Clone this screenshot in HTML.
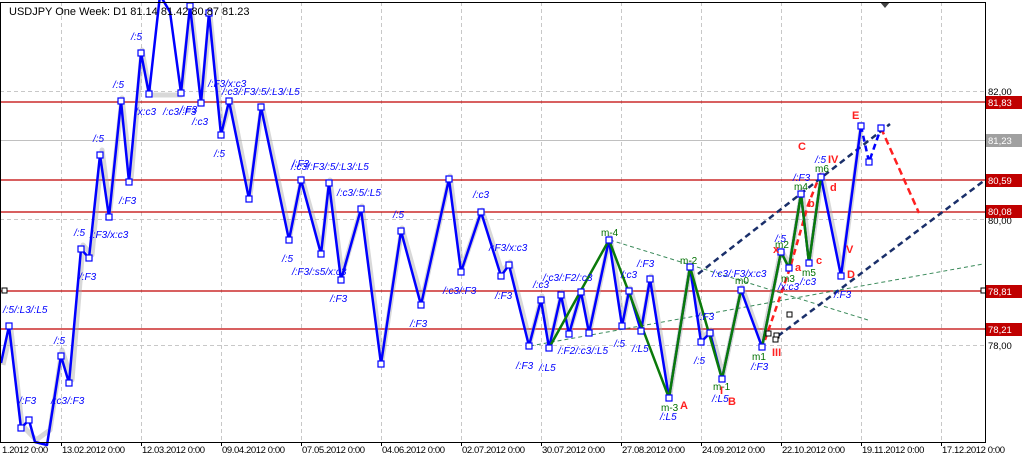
<!DOCTYPE html>
<html><head><meta charset="utf-8"><style>
body{margin:0;background:#fff;width:1022px;height:457px;overflow:hidden}
svg{display:block;font-family:"Liberation Sans",sans-serif}
.b{fill:#0000ff;font-size:10px}
.g{fill:#007000;font-size:10px}
.r{fill:#ff2020;font-size:11px;font-weight:bold}
.ax{fill:#000;font-size:9.5px}
</style></head><body>
<svg width="1022" height="457" viewBox="0 0 1022 457">
<rect x="0" y="0" width="1022" height="457" fill="#fff"/>
<g stroke="#c8c8c8" stroke-dasharray="4,3" stroke-width="1">
<line x1="61.5" y1="2" x2="61.5" y2="442"/><line x1="141.5" y1="2" x2="141.5" y2="442"/><line x1="221.5" y1="2" x2="221.5" y2="442"/><line x1="301.5" y1="2" x2="301.5" y2="442"/><line x1="381.5" y1="2" x2="381.5" y2="442"/><line x1="461.5" y1="2" x2="461.5" y2="442"/><line x1="541.5" y1="2" x2="541.5" y2="442"/><line x1="621.5" y1="2" x2="621.5" y2="442"/><line x1="701.5" y1="2" x2="701.5" y2="442"/><line x1="781.5" y1="2" x2="781.5" y2="442"/><line x1="861.5" y1="2" x2="861.5" y2="442"/><line x1="941.5" y1="2" x2="941.5" y2="442"/>
<line x1="0" y1="91.5" x2="985" y2="91.5"/><line x1="0" y1="219.5" x2="985" y2="219.5"/><line x1="0" y1="345.5" x2="985" y2="345.5"/>
</g>
<line x1="0" y1="140.5" x2="985" y2="140.5" stroke="#c0c0c0"/>
<g stroke="#c00000" stroke-width="1.3">
<line x1="0" y1="102" x2="985" y2="102"/><line x1="0" y1="180" x2="985" y2="180"/><line x1="0" y1="212" x2="985" y2="212"/><line x1="0" y1="291" x2="985" y2="291"/><line x1="0" y1="329" x2="985" y2="329"/>
</g>
<polyline fill="none" stroke="#a8a8a8" stroke-width="5" opacity="0.45" stroke-linejoin="round" points="3,365 11,330 22,425 36,440 50,430 62,350 72,380 83,245 92,255 102,150 110,210 122,98 131,180 142,50 150,95 181,95 191,8 202,100 210,15 222,130 231,100 250,195 262,105 290,235 302,178 322,250 330,180 342,275 362,206 382,360 402,228 422,300 450,176 462,268 482,210 502,272 510,262 530,342 542,296 550,345 562,292 570,330 582,290 590,330 610,237 623,322 630,288 642,328 651,276 670,394 691,263 702,338 711,330 723,375 742,287 762,343 781,250 790,265 802,190 810,260 822,174 842,272 862,122"/>
<g fill="none" stroke="#3a8a5a" stroke-width="1" stroke-dasharray="4,3">
<line x1="530" y1="346" x2="983" y2="264"/><line x1="610" y1="240" x2="868" y2="320"/>
</g>
<g fill="none" stroke="#1a2f6a" stroke-width="2.5" stroke-dasharray="6,4">
<line x1="698" y1="274" x2="890" y2="124"/><line x1="778" y1="336" x2="985" y2="180"/>
</g>
<polyline fill="none" stroke="#ff2020" stroke-width="2.5" stroke-dasharray="7,4" points="881,128 919,213"/>
<polyline fill="none" stroke="#ff2020" stroke-width="2.5" stroke-dasharray="6,4" points="765,340 790,268 808,205 822,170"/>
<polyline fill="none" stroke="#0000ff" stroke-width="2.5" stroke-dasharray="6,4" points="861,126 869,162 881,128"/>
<polyline fill="none" stroke="#0000ff" stroke-width="2.5" stroke-linejoin="round" points="1,363 9,326 21,428 29,420 35,442 47,445 61,356 69,383 81,249 89,258 100,155 109,217 121,101 129,182 141,53 149,94 160,-5 170,12 181,93 190,6 201,103 209,13 221,135 229,101 249,199 261,107 289,240 301,180 321,254 329,183 341,280 361,209 381,364 401,231 421,305 449,179 461,272 481,212 501,276 509,265 529,346 541,300 549,348 561,295 569,334 581,292 589,333 609,240 622,326 629,291 641,331 650,279 669,398 690,267 701,342 710,333 722,379 741,290 762,347 781,252 789,268 801,194 809,263 821,177 841,276 861,126"/>
<polyline fill="none" stroke="#0a7a0a" stroke-width="2.5" stroke-linejoin="round" points="549,348 609,240 669,398 690,267 722,379 741,290"/>
<polyline fill="none" stroke="#0a7a0a" stroke-width="2.5" stroke-linejoin="round" points="762,347 781,252 789,268 801,194 809,263 821,177"/>
<g fill="#fff" stroke="#0000ff" stroke-width="1.2">
<rect x="6" y="323" width="6" height="6"/><rect x="18" y="425" width="6" height="6"/><rect x="26" y="417" width="6" height="6"/><rect x="58" y="353" width="6" height="6"/><rect x="66" y="380" width="6" height="6"/><rect x="78" y="246" width="6" height="6"/><rect x="86" y="255" width="6" height="6"/><rect x="97" y="152" width="6" height="6"/><rect x="106" y="214" width="6" height="6"/><rect x="118" y="98" width="6" height="6"/><rect x="126" y="179" width="6" height="6"/><rect x="138" y="50" width="6" height="6"/><rect x="146" y="91" width="6" height="6"/><rect x="178" y="90" width="6" height="6"/><rect x="187" y="3" width="6" height="6"/><rect x="198" y="100" width="6" height="6"/><rect x="206" y="10" width="6" height="6"/><rect x="218" y="132" width="6" height="6"/><rect x="226" y="98" width="6" height="6"/><rect x="246" y="196" width="6" height="6"/><rect x="258" y="104" width="6" height="6"/><rect x="286" y="237" width="6" height="6"/><rect x="298" y="177" width="6" height="6"/><rect x="318" y="251" width="6" height="6"/><rect x="326" y="180" width="6" height="6"/><rect x="338" y="277" width="6" height="6"/><rect x="358" y="206" width="6" height="6"/><rect x="378" y="361" width="6" height="6"/><rect x="398" y="228" width="6" height="6"/><rect x="418" y="302" width="6" height="6"/><rect x="446" y="176" width="6" height="6"/><rect x="458" y="269" width="6" height="6"/><rect x="478" y="209" width="6" height="6"/><rect x="498" y="273" width="6" height="6"/><rect x="506" y="262" width="6" height="6"/><rect x="526" y="343" width="6" height="6"/><rect x="538" y="297" width="6" height="6"/><rect x="546" y="345" width="6" height="6"/><rect x="558" y="292" width="6" height="6"/><rect x="566" y="331" width="6" height="6"/><rect x="578" y="289" width="6" height="6"/><rect x="586" y="330" width="6" height="6"/><rect x="606" y="237" width="6" height="6"/><rect x="619" y="323" width="6" height="6"/><rect x="626" y="288" width="6" height="6"/><rect x="638" y="328" width="6" height="6"/><rect x="647" y="276" width="6" height="6"/><rect x="666" y="395" width="6" height="6"/><rect x="687" y="264" width="6" height="6"/><rect x="698" y="339" width="6" height="6"/><rect x="707" y="330" width="6" height="6"/><rect x="719" y="376" width="6" height="6"/><rect x="738" y="287" width="6" height="6"/><rect x="759" y="344" width="6" height="6"/><rect x="778" y="249" width="6" height="6"/><rect x="786" y="265" width="6" height="6"/><rect x="798" y="191" width="6" height="6"/><rect x="806" y="260" width="6" height="6"/><rect x="818" y="174" width="6" height="6"/><rect x="838" y="273" width="6" height="6"/><rect x="858" y="123" width="6" height="6"/><rect x="866" y="159" width="6" height="6"/><rect x="878" y="125" width="6" height="6"/>
</g>
<g fill="#fff" stroke="#000" stroke-width="1">
<rect x="766" y="331" width="5" height="5"/><rect x="774" y="333" width="5" height="5"/><rect x="787" y="312" width="5" height="5"/><rect x="773" y="337" width="5" height="5"/><rect x="2" y="288" width="5" height="5"/><rect x="981" y="288" width="5" height="5"/>
</g>
<g class="b" font-style="italic">
<text x="131" y="40">/:5</text><text x="113" y="88">/:5</text><text x="135" y="115">/x:c3</text><text x="163" y="115">/:c3/:F3</text><text x="192" y="125">/:c3</text><text x="93" y="142">/:5</text><text x="208" y="87">/:F3/x:c3</text><text x="222" y="95">/:c3/:F3/:5/:L3/:L5</text><text x="214" y="157">/:5</text><text x="180" y="113">/:F3</text><text x="292" y="167">/:F3</text><text x="291" y="170">/:c3/:F3/:5/:L3/:L5</text><text x="337" y="196">/:c3/:5/:L5</text><text x="393" y="218">/:5</text><text x="282" y="262">/:5</text><text x="292" y="275">/:F3/:s5/x:c3</text><text x="330" y="302">/:F3</text><text x="410" y="327">/:F3</text><text x="443" y="294">/:c3/:F3</text><text x="473" y="198">/:c3</text><text x="489" y="251">/:F3/x:c3</text><text x="495" y="299">/:F3</text><text x="533" y="288">/:c3</text><text x="543" y="281">/:c3/:F2/:c3</text><text x="621" y="278">/:c3</text><text x="637" y="267">/:F3</text><text x="516" y="369">/:F3</text><text x="539" y="371">/:L5</text><text x="558" y="354">/:F2/:c3/:L5</text><text x="614" y="347">/:5</text><text x="632" y="352">/:L5</text><text x="694" y="364">/:5</text><text x="697" y="320">/:F3</text><text x="712" y="277">/:c3/:F3/x:c3</text><text x="660" y="420">/:L5</text><text x="712" y="402">/:L5</text><text x="751" y="370">/:F3</text><text x="775" y="242">/:5</text><text x="778" y="290">/x:c3</text><text x="800" y="285">/:c3</text><text x="793" y="181">/:F3</text><text x="815" y="163">/:5</text><text x="834" y="298">/:F3</text>
<text x="119" y="204">/:F3</text><text x="74" y="236">/:5</text><text x="90" y="238">/:F3/x:c3</text><text x="79" y="280">/:F3</text><text x="3" y="313">/:5/:L3/:L5</text><text x="54" y="344">/:5</text><text x="19" y="404">/:F3</text><text x="51" y="404">/:c3/:F3</text>
</g>
<g class="g">
<text x="601" y="236">m-4</text><text x="680" y="264">m-2</text><text x="735" y="284">m0</text><text x="661" y="411">m-3</text><text x="713" y="390">m-1</text><text x="752" y="360">m1</text><text x="775" y="248">m2</text><text x="781" y="282">m3</text><text x="794" y="190">m4</text><text x="802" y="276">m5</text><text x="815" y="172">m6</text>
</g>
<g class="r">
<text x="680" y="409">A</text><text x="728" y="405">B</text><text x="772" y="356">III</text><text x="798" y="150">C</text><text x="828" y="163">IV</text><text x="852" y="119">E</text><text x="830" y="191">d</text><text x="808" y="207">b</text><text x="773" y="253">x</text><text x="795" y="271">a</text><text x="816" y="264">c</text><text x="846" y="253">V</text><text x="847" y="278">D</text><text x="720" y="394">I</text>
</g>
<text x="9" y="15" font-size="11" fill="#000">USDJPY One Week: D1 81.14 81.42 80.87 81.23</text>
<polygon points="880,2 890,2 885,8" fill="#444"/>
<rect x="0.5" y="2.5" width="985" height="440" fill="none" stroke="#000"/>
<g class="ax"><text x="988" y="95">82,00</text><text x="988" y="224">80,00</text><text x="988" y="349">78,00</text></g>
<g font-size="9.5">
<rect x="986" y="96" width="36" height="13" fill="#c00000"/><text x="988" y="106" fill="#fff">81,83</text>
<rect x="986" y="134" width="36" height="13" fill="#a0a0a0"/><text x="988" y="144" fill="#fff">81,23</text>
<rect x="986" y="174" width="36" height="13" fill="#c00000"/><text x="988" y="184" fill="#fff">80,59</text>
<rect x="986" y="205" width="36" height="13" fill="#c00000"/><text x="988" y="215" fill="#fff">80,08</text>
<rect x="986" y="285" width="36" height="13" fill="#c00000"/><text x="988" y="295" fill="#fff">78,81</text>
<rect x="986" y="323" width="36" height="13" fill="#c00000"/><text x="988" y="333" fill="#fff">78,21</text>
</g>
<g class="ax" font-size="9" letter-spacing="-0.4">
<text x="2" y="453">1.2012 0:00</text><text x="62" y="453">13.02.2012 0:00</text><text x="142" y="453">12.03.2012 0:00</text><text x="222" y="453">09.04.2012 0:00</text><text x="302" y="453">07.05.2012 0:00</text><text x="382" y="453">04.06.2012 0:00</text><text x="462" y="453">02.07.2012 0:00</text><text x="542" y="453">30.07.2012 0:00</text><text x="622" y="453">27.08.2012 0:00</text><text x="702" y="453">24.09.2012 0:00</text><text x="782" y="453">22.10.2012 0:00</text><text x="862" y="453">19.11.2012 0:00</text><text x="942" y="453">17.12.2012 0:00</text>
</g>
<g stroke="#000"><line x1="61.5" y1="442" x2="61.5" y2="446"/><line x1="141.5" y1="442" x2="141.5" y2="446"/><line x1="221.5" y1="442" x2="221.5" y2="446"/><line x1="301.5" y1="442" x2="301.5" y2="446"/><line x1="381.5" y1="442" x2="381.5" y2="446"/><line x1="461.5" y1="442" x2="461.5" y2="446"/><line x1="541.5" y1="442" x2="541.5" y2="446"/><line x1="621.5" y1="442" x2="621.5" y2="446"/><line x1="701.5" y1="442" x2="701.5" y2="446"/><line x1="781.5" y1="442" x2="781.5" y2="446"/><line x1="861.5" y1="442" x2="861.5" y2="446"/><line x1="941.5" y1="442" x2="941.5" y2="446"/></g>
</svg>
</body></html>
